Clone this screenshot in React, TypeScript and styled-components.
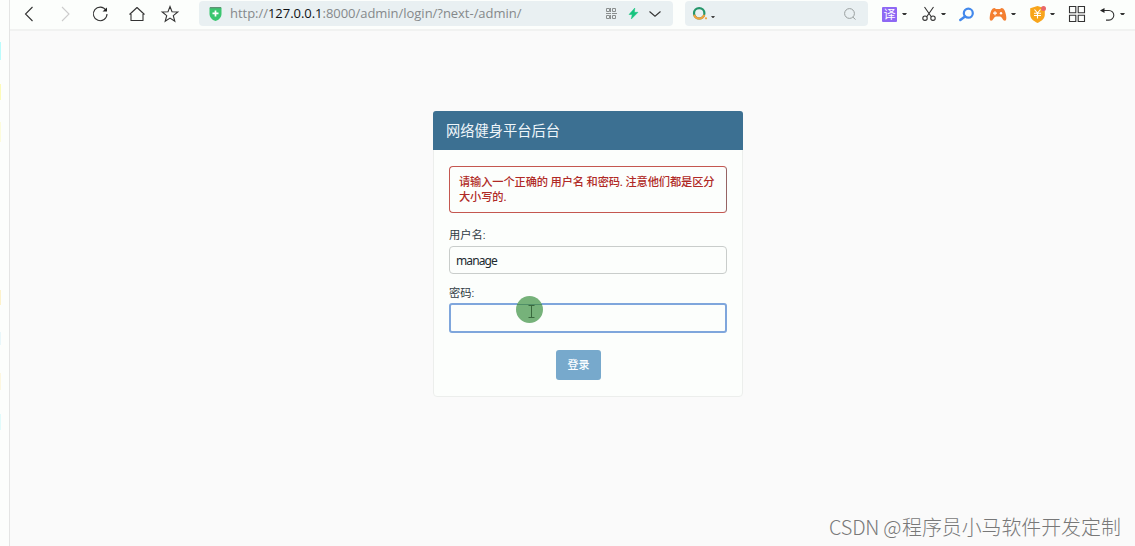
import React from 'react';
import styled, { createGlobalStyle } from 'styled-components';

const GlobalStyle = createGlobalStyle`
  *, *::before, *::after { box-sizing: border-box; }
  body {
    margin: 0;
    overflow: hidden;
    background: #fafafa;
    font-family: Roboto, 'Noto Sans CJK SC', sans-serif;
  }
`;

const Screen = styled.div`
  display: flex;
  position: relative;
  width: 1135px;
  height: 546px;
`;

const SideStrip = styled.aside`
  display: flex;
  flex-direction: column;
  flex: none;
  width: 10px;
  background: #fcfefc;
  border-right: 1px solid #e4e5e4;
`;

const Mark = styled.span<{ $gap: number; $height: number; $color: string }>`
  width: 1px;
  height: ${p => p.$height}px;
  margin-top: ${p => p.$gap}px;
  background: ${p => p.$color};
`;

const Browser = styled.div`
  display: flex;
  flex-direction: column;
  flex: 1;
  min-width: 0;
`;

const Toolbar = styled.header`
  display: flex;
  align-items: flex-start;
  flex: none;
  height: 31px;
  background: #fcfefc;
  border-bottom: 2px solid #f1f2f1;
`;

const Tool = styled.span<{ $gap: number; $width: number }>`
  display: flex;
  align-items: center;
  justify-content: center;
  flex: none;
  width: ${p => p.$width}px;
  height: 28px;
  margin-left: ${p => p.$gap}px;
  svg { display: block; overflow: visible; }
`;

const Field = styled.div<{ $gap: number; $width: number }>`
  display: flex;
  align-items: center;
  flex: none;
  width: ${p => p.$width}px;
  height: 25px;
  margin: 1px 0 0 ${p => p.$gap}px;
  border-radius: 4px;
  background: #e9f0f2;
  ${Tool} { height: 25px; }
`;

const Url = styled.span`
  width: 293px;
  margin-left: 8px;
  font: 13px/25px 'Open Sans', sans-serif;
  height: 25px;
  letter-spacing: -0.03px;
  color: #85898b;
  white-space: nowrap;
  b { font-weight: 400; color: #101214; }
`;

const TranslateBadge = styled.span`
  width: 15px;
  height: 15px;
  border-radius: 1px;
  background: #8e68f4;
  color: #fff;
  font: 12px/14px 'Noto Sans CJK SC', sans-serif;
  text-align: center;
`;

const Page = styled.main`
  flex: 1;
  padding: 80px 0 0 423px;
`;

const Card = styled.section`
  display: flex;
  flex-direction: column;
  width: 310px;
  height: 286px;
  background: #fcfefc;
  border: 1px solid #eceeec;
  border-radius: 4px;
`;

const CardHeader = styled.h1`
  flex: none;
  height: 39px;
  margin: -1px -1px 0;
  padding-left: 13px;
  border-radius: 3px 3px 0 0;
  background: #3c7092;
  color: #eff6fa;
  font-size: 14.25px;
  font-weight: 400;
  line-height: 40px;
`;

const Form = styled.form`
  display: flex;
  flex-direction: column;
  padding: 16px 15px;
`;

const ErrorNote = styled.p`
  height: 47px;
  margin: 0 0 14px;
  padding: 8px 9px;
  border: 1px solid #c45750;
  border-right-color: #966464;
  border-radius: 4px;
  color: #b02a26;
  font-size: 11.25px;
  font-weight: 500;
  line-height: 15px;
  letter-spacing: -0.14px;
  white-space: nowrap;
`;

const Label = styled.label<{ $top?: number }>`
  height: 16px;
  margin: ${p => p.$top ?? 0}px 0 3px;
  color: #303c44;
  font-size: 11.25px;
  line-height: 17px;
`;

const Input = styled.input<{ $active?: boolean }>`
  width: 278px;
  height: ${p => (p.$active ? 30 : 28)}px;
  margin-top: ${p => (p.$active ? -1 : 0)}px;
  padding: 1px 6px 0;
  border: ${p => (p.$active ? '2px solid #7fa6dc' : '1px solid #c9cdcb')};
  border-radius: ${p => (p.$active ? 3 : 4)}px;
  outline: none;
  background: #fcfefc;
  color: #20292e;
  font: 12px 'Noto Sans', sans-serif;
  letter-spacing: -0.9px;
`;

const Submit = styled.button`
  align-self: center;
  width: 45px;
  height: 30px;
  margin: 17px 19px 0 0;
  padding: 0 0 2px;
  border: 0;
  border-radius: 3px;
  background: #77a9cc;
  color: #fafdff;
  font: 500 11px 'Noto Sans CJK SC', sans-serif;
`;

const Pointer = styled.div`
  position: absolute;
  left: 516px;
  top: 296px;
  width: 27px;
  height: 27px;
  border-radius: 50%;
  overflow: hidden;
  background: #76b27a;
  svg { display: block; }
`;

const Watermark = styled.div`
  position: absolute;
  left: 829px;
  top: 512px;
  color: #787878;
  font: 300 19.9px/30px 'Noto Sans CJK SC', sans-serif;
  white-space: nowrap;
`;

const WatermarkSite = styled.span`
  display: inline-block;
  width: 73px;
  letter-spacing: -0.2px;
`;

const Caret = ({ gap = 5 }: { gap?: number }) => (
  <Tool $gap={gap} $width={5}>
    <svg width="5" height="2" viewBox="0 0 5 2"><path d="M0 0h5L3.500 2h-2z" fill="#333" /></svg>
  </Tool>
);

const line = { fill: 'none', stroke: '#333', strokeWidth: 1.1 };

export default function App() {
  return (
    <Screen>
      <GlobalStyle />
      <SideStrip>
        <Mark $gap={42} $height={18} $color="#bafcfc" />
        <Mark $gap={24} $height={16} $color="#fdfbb8" />
        <Mark $gap={22} $height={20} $color="#fdfcdb" />
        <Mark $gap={148} $height={15} $color="#fdf2ca" />
        <Mark $gap={27} $height={13} $color="#e8f7fa" />
        <Mark $gap={28} $height={17} $color="#fdf7df" />
        <Mark $gap={24} $height={16} $color="#e0fbfb" />
      </SideStrip>
      <Browser>
        <Toolbar>
          <Tool $gap={11} $width={16}>
            <svg width="16" height="18" viewBox="0 0 16 18"><path d="M11.5 2L4.5 9l7 7" {...line} /></svg>
          </Tool>
          <Tool $gap={20} $width={16}>
            <svg width="16" height="18" viewBox="0 0 16 18"><path d="M5 2l7 7-7 7" {...line} stroke="#ccc" /></svg>
          </Tool>
          <Tool $gap={19} $width={16}>
            <svg width="16" height="16" viewBox="0 0 16 16">
              <path d="M13.9 4.2A6.8 6.8 0 1 0 15 8" {...line} />
              <path d="M15 1.500v4h-4.500z" fill="#222" />
            </svg>
          </Tool>
          <Tool $gap={20} $width={18}>
            <svg width="18" height="16" viewBox="0 0 18 16"><path d="M3 8v6.500h12V8M1.500 8.500L9 1.500l7.500 7" {...line} strokeLinejoin="round" /></svg>
          </Tool>
          <Tool $gap={15} $width={18}>
            <svg width="18" height="18" viewBox="0 0 18 18"><path d="M9 1.5l2 5.3 5.8.2-4.5 3.6 1.500 5.700L9 13.100l-4.800 3.200 1.500-5.700L1.200 7 7 6.800z" {...line} /></svg>
          </Tool>
          <Field $gap={20} $width={474}>
            <Tool $gap={10} $width={13}>
              <svg width="13" height="14" viewBox="0 0 13 14">
                <path d="M0.5 1.3C.5.4 1 0 2 0h9c1 0 1.5.4 1.5 1.3v5.4c0 3.7-2.5 6-6 7.3C3 12.7.5 10.4.5 6.7z" fill="#3ac66f" />
                <path d="M1 .7h11" stroke="#658b76" strokeWidth="1.2" />
                <path d="M6.5 3.4v6M3.5 6.4h6" stroke="#fff" strokeWidth="1.7" />
              </svg>
            </Tool>
            <Url>http://<b>127.0.0.1</b>:8000/admin/login/?next-/admin/</Url>
            <Tool $gap={83} $width={11}>
              <svg width="11" height="11" viewBox="0 0 11 11" fill="none" stroke="#8a8e8e">
                <path d="M.5.5h3v3h-3zM4.500 0v4M6.500.5h3v3h-3zM.5 7.500h3v3h-3zM6.500 7.500h3v3h-3zM4.500 7v4M0 5.500h5M6 5.500h5" />
              </svg>
            </Tool>
            <Tool $gap={12} $width={9}>
              <svg width="9" height="11" viewBox="0 0 9 11"><path d="M5.800 0L0 6.500h3.200L2.300 11 9 4.300H5.400z" fill="#16c47f" stroke="#16c47f" strokeWidth=".5" /></svg>
            </Tool>
            <Tool $gap={11} $width={12}>
              <svg width="12" height="6" viewBox="0 0 12 6"><path d="M.5.5L6 5.200 11.500.5" {...line} /></svg>
            </Tool>
          </Field>
          <Field $gap={12} $width={183}>
            <Tool $gap={8} $width={15}>
              <svg width="15" height="13" viewBox="0 0 15 13" fill="none">
                <circle cx="6.200" cy="6.300" r="5.200" stroke="#24966a" strokeWidth="2.200" />
                <path d="M1.200 7.800A5.200 5.200 0 0 0 11.200 7.800" stroke="#f3a13c" strokeWidth="2.200" />
                <circle cx="13" cy="11.300" r="1.100" fill="#f3a13c" />
              </svg>
            </Tool>
            <Tool $gap={3} $width={4}>
              <svg width="4" height="3" viewBox="0 0 4 3"><path d="M0 0h4L2.500 2h-1z" transform="translate(0 4)" fill="#444" /></svg>
            </Tool>
            <Tool $gap={129} $width={12}>
              <svg width="12" height="12" viewBox="0 0 12 12"><path d="M9 9.200L11.500 11.500" stroke="#999f9f" /><circle cx="5.500" cy="5.500" r="4.900" fill="none" stroke="#999f9f" /></svg>
            </Tool>
          </Field>
          <Tool $gap={14} $width={15}><TranslateBadge>译</TranslateBadge></Tool>
          <Caret gap={5} />
          <Tool $gap={15} $width={14}>
            <svg width="14" height="14" viewBox="0 0 14 14" {...line}>
              <path d="M2.500 0l6.800 9.800M11.500 0L4.700 9.800" /><circle cx="3" cy="11.200" r="2.200" /><circle cx="11" cy="11.200" r="2.200" />
            </svg>
          </Tool>
          <Caret gap={5} />
          <Tool $gap={13} $width={15}>
            <svg width="15" height="13" viewBox="0 0 15 13"><circle cx="9.300" cy="5.200" r="4.500" fill="none" stroke="#4389ec" strokeWidth="2.200" /><path d="M6 8.500L1.300 12" stroke="#4389ec" strokeWidth="2.500" strokeLinecap="round" /></svg>
          </Tool>
          <Tool $gap={15} $width={18}>
            <svg width="18" height="13" viewBox="0 0 18 13">
              <path d="M5.500 0L7 1h4l1.500-1c2.500 0 3.700 3 4.500 7 .600 3 .500 5.500-1 5.800-2 .200-3-4.300-5-4.300H7c-2 0-3 4.500-5 4.300C.500 12.500.400 10 1 7 1.800 3 3 0 5.500 0z" fill="#f47f31" />
              <path d="M6 3.200v4M4 5.200h4" stroke="#fff" strokeWidth="1.200" /><circle cx="12" cy="5.300" r="1.200" fill="#fff" />
            </svg>
          </Tool>
          <Caret gap={4} />
          <Tool $gap={13} $width={17}>
            <svg width="17" height="17" viewBox="0 0 17 17">
              <path d="M8.500 0l7.300 2.300v6.500c0 3.700-3 6.300-7.300 8.100-4.300-1.800-7.300-4.400-7.300-8.100V2.300z" fill="#f8a51b" />
              <path d="M5.500 3.500L8.500 7l3-3.500M5 7.200h7M5 9.500h7M8.500 7v5.500" fill="none" stroke="#fff" strokeWidth="1.100" />
              <circle cx="14.500" cy="2.500" r="2.500" fill="#e9686a" />
            </svg>
          </Tool>
          <Caret gap={4} />
          <Tool $gap={14} $width={16}>
            <svg width="16" height="16" viewBox="0 0 16 16"><path d="M.5.500h6.300v6.300H.5zM9.200.500H15.500v6.300H9.200zM.5 9.200h6.300V15.500H.5zM9.200 9.200h6.300V15.500H9.200z" {...line} /></svg>
          </Tool>
          <Tool $gap={15} $width={15}>
            <svg width="15" height="14" viewBox="0 0 15 14"><path d="M2.500 3.500h6.500a4.800 4.800 0 0 1 0 9.600H6" {...line} /><path d="M0 3.500L4.500 1v5z" fill="#222" /></svg>
          </Tool>
          <Caret gap={5} />
        </Toolbar>
        <Page>
          <Card>
            <CardHeader>网络健身平台后台</CardHeader>
            <Form>
              <ErrorNote>请输入一个正确的 用户名 和密码. 注意他们都是区分<br />大小写的.</ErrorNote>
              <Label htmlFor="username">用户名:</Label>
              <Input id="username" defaultValue="manage" />
              <Label htmlFor="password" $top={11}>密码:</Label>
              <Input id="password" type="password" $active />
              <Submit type="button">登录</Submit>
            </Form>
          </Card>
        </Page>
      </Browser>
      <Pointer>
        <svg width="27" height="27" viewBox="0 0 27 27">
          <path d="M0 8.500h27" stroke="#3f8060" strokeWidth="1" opacity=".7" />
          <path d="M12.500 9.500h6M15.500 10v11M12.500 21.500h6" stroke="#39683d" strokeWidth="1" />
        </svg>
      </Pointer>
      <Watermark><WatermarkSite>CSDN @</WatermarkSite>程序员小马软件开发定制</Watermark>
    </Screen>
  );
}
